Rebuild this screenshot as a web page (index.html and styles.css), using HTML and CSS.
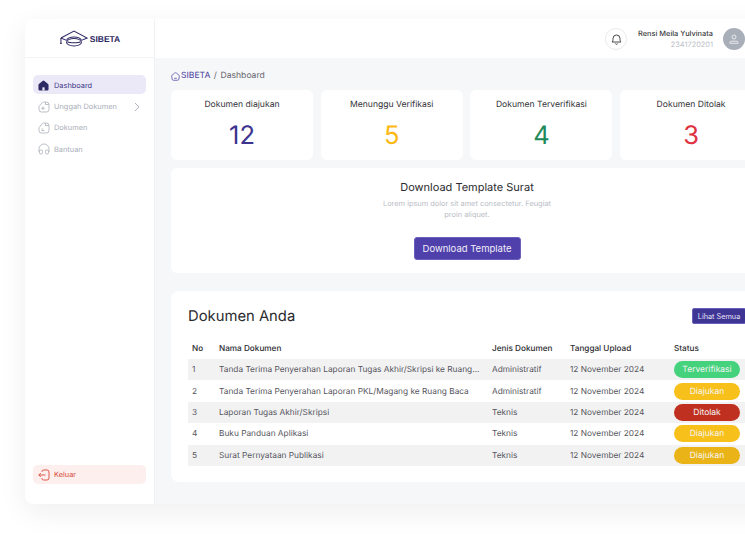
FILE: index.html
```html
<!DOCTYPE html>
<html lang="en">
<head>
    <meta charset="UTF-8">
    <meta name="viewport" content="width=device-width, initial-scale=1.0">
    <title>SIBETA Dashboard</title>
    <link rel="stylesheet" href="styles.css">
</head>
<body>
    <div class="app">
        <aside class="sidebar">
            <div class="logo">
                <svg class="logo-icon" width="28" height="17" viewBox="0 0 30 18" fill="none" stroke="#2e2a63" stroke-width="1.1">
                    <path d="M1 8.500 15 1l14 7.500-6 2.500"/>
                    <path d="M1 8.500 7 11"/>
                    <path d="M1 8.500v4.500"/>
                    <path d="M7 11c1-2.500 4-3.500 8-3.500s7 1 8 3.500"/>
                    <ellipse cx="15" cy="13" rx="8" ry="4"/>
                    <path d="M8 12.500c2 1.500 12 1.500 14 0"/>
                    <circle cx="1" cy="14" r="1" fill="#2e2a63" stroke="none"/>
                </svg>
                <span class="logo-text">SIBETA</span>
            </div>
            <nav class="nav">
                <a class="nav-item active">
                    <svg width="11" height="11" viewBox="0 0 12 12"><path fill="#2e2a63" d="M5 1a1.500 1.500 0 0 1 2 0l4 3.300a1.500 1.500 0 0 1 .5 1.100V10a1.500 1.500 0 0 1-1.500 1.500H2A1.500 1.500 0 0 1 .5 10V5.400A1.500 1.500 0 0 1 1 4.300z"/><rect x="4.800" y="8" width="2.400" height="3.500" fill="#ebe9f8"/></svg>
                    Dashboard
                </a>
                <a class="nav-item">
                    <svg width="12" height="12" viewBox="0 0 12 12" fill="none" stroke="#a9aeb8" stroke-width=".8"><path d="M1 5.500 4.500 1.500a1 1 0 0 1 .8-.4H8.500A2.500 2.500 0 0 1 11 3.600V8.500A2.500 2.500 0 0 1 8.500 11h-5A2.500 2.500 0 0 1 1 8.500z"/><path d="M5 5.500v3.500M3.200 7.200h3.600"/><path d="M7.500 1.200v2.300h3.300"/></svg>
                    Unggah Dokumen
                    <svg class="chevron" width="6" height="10" viewBox="0 0 6 10" fill="none" stroke="#9ca1ab" stroke-width=".8"><path d="m1 1 4 4-4 4"/></svg>
                </a>
                <a class="nav-item">
                    <svg width="12" height="12" viewBox="0 0 12 12" fill="none" stroke="#a9aeb8" stroke-width=".8"><path d="M1 5.500 4.500 1.500a1 1 0 0 1 .8-.4H8.500A2.500 2.500 0 0 1 11 3.600V8.500A2.500 2.500 0 0 1 8.500 11h-5A2.500 2.500 0 0 1 1 8.500z"/><path d="M7.500 1.200v2.300h3.300"/><path d="M3.500 8.500h3M3.500 7h1.500"/></svg>
                    Dokumen
                </a>
                <a class="nav-item">
                    <svg width="12" height="12" viewBox="0 0 12 12" fill="none" stroke="#a9aeb8" stroke-width=".8"><path d="M1 9V6a5 5 0 0 1 10 0v3"/><rect x="1.500" y="7" width="3" height="4" rx="1.200"/><rect x="7.500" y="7" width="3" height="4" rx="1.200"/></svg>
                    Bantuan
                </a>
            </nav>
            <a class="logout">
                <svg width="12" height="12" viewBox="0 0 12 12" fill="none" stroke="#d9483b" stroke-width=".9"><path d="M4 3V2.500A1.500 1.500 0 0 1 5.500 1H9a2 2 0 0 1 2 2v6a2 2 0 0 1-2 2H5.500A1.500 1.500 0 0 1 4 9.500V9"/><path d="M7.500 6H.8M2.800 4l-2 2 2 2"/></svg>
                Keluar
            </a>
        </aside>

        <div class="main">
            <header class="topbar">
                <div class="bell">
                    <svg width="11" height="12" viewBox="0 0 11 12" fill="none" stroke="#333" stroke-width=".9"><path d="M1 9c.8-.8 1-1.500 1-3.500a3.500 3.500 0 0 1 7 0C9 7.500 9.200 8.200 10 9z"/><path d="M4.300 10.500a1.300 1.300 0 0 0 2.400 0"/></svg>
                </div>
                <div class="user">
                    <div class="user-name">Rensi Meila Yulvinata</div>
                    <div class="user-id">2341720201</div>
                </div>
                <div class="avatar">
                    <svg width="10" height="10" viewBox="0 0 10 10" fill="none" stroke="#fff" stroke-width=".7"><circle cx="5" cy="3" r="2"/><path d="M1 9.300V8.500c0-.8.600-1.300 1.300-1.300h5.400c.7 0 1.300.5 1.300 1.300v.8z"/></svg>
                </div>
            </header>

            <div class="content">
                <div class="breadcrumb">
                    <svg width="9" height="9" viewBox="0 0 10 10" fill="none" stroke="#4b3fa0" stroke-width=".8"><path d="M4 1.200a1.500 1.500 0 0 1 2 0l2.800 2.300a1.200 1.200 0 0 1 .5 1.100L8.700 8a1.300 1.300 0 0 1-1.300 1.200H2.600A1.300 1.300 0 0 1 1.300 8L.7 4.600a1.200 1.200 0 0 1 .5-1.100z"/><path d="M3.500 7h3"/></svg>
                    <span class="crumb-root">SIBETA</span>
                    <span class="crumb-sep">/</span>
                    <span>Dashboard</span>
                </div>

                <div class="stats">
                    <div class="card stat">
                        <div class="stat-label">Dokumen diajukan</div>
                        <div class="stat-value purple">12</div>
                    </div>
                    <div class="card stat">
                        <div class="stat-label">Menunggu Verifikasi</div>
                        <div class="stat-value yellow">5</div>
                    </div>
                    <div class="card stat">
                        <div class="stat-label">Dokumen Terverifikasi</div>
                        <div class="stat-value green">4</div>
                    </div>
                    <div class="card stat">
                        <div class="stat-label">Dokumen Ditolak</div>
                        <div class="stat-value red">3</div>
                    </div>
                </div>

                <div class="card download">
                    <h2>Download Template Surat</h2>
                    <p>Lorem ipsum dolor sit amet consectetur. Feugiat<br>proin aliquet.</p>
                    <button class="btn-download">Download Template</button>
                </div>

                <div class="card documents">
                    <div class="documents-head">
                        <h2>Dokumen Anda</h2>
                        <button class="btn-all">Lihat Semua</button>
                    </div>
                    <table>
                        <thead>
                            <tr>
                                <th class="col-no">No</th>
                                <th class="col-name">Nama Dokumen</th>
                                <th class="col-type">Jenis Dokumen</th>
                                <th class="col-date">Tanggal Upload</th>
                                <th>Status</th>
                            </tr>
                        </thead>
                        <tbody>
                            <tr>
                                <td>1</td>
                                <td><div class="doc-name">Tanda Terima Penyerahan Laporan Tugas Akhir/Skripsi ke Ruang Baca</div></td>
                                <td>Administratif</td>
                                <td>12 November 2024</td>
                                <td class="status"><span class="pill pill-green">Terverifikasi</span></td>
                            </tr>
                            <tr>
                                <td>2</td>
                                <td><div class="doc-name">Tanda Terima Penyerahan Laporan PKL/Magang ke Ruang Baca</div></td>
                                <td>Administratif</td>
                                <td>12 November 2024</td>
                                <td class="status"><span class="pill pill-yellow">Diajukan</span></td>
                            </tr>
                            <tr>
                                <td>3</td>
                                <td><div class="doc-name">Laporan Tugas Akhir/Skripsi</div></td>
                                <td>Teknis</td>
                                <td>12 November 2024</td>
                                <td class="status"><span class="pill pill-red">Ditolak</span></td>
                            </tr>
                            <tr>
                                <td>4</td>
                                <td><div class="doc-name">Buku Panduan Aplikasi</div></td>
                                <td>Teknis</td>
                                <td>12 November 2024</td>
                                <td class="status"><span class="pill pill-yellow">Diajukan</span></td>
                            </tr>
                            <tr>
                                <td>5</td>
                                <td><div class="doc-name">Surat Pernyataan Publikasi</div></td>
                                <td>Teknis</td>
                                <td>12 November 2024</td>
                                <td class="status"><span class="pill pill-yellow-dark">Diajukan</span></td>
                            </tr>
                        </tbody>
                    </table>
                </div>
            </div>
        </div>
    </div>
</body>
</html>
```

FILE: styles.css
```css
* {
    box-sizing: border-box;
}
html, body {
    height: 534px;
    overflow: hidden;
}
body {
    margin: 0;
    background: #fff;
    font-family: Inter, "Liberation Sans", sans-serif;
    color: #2b2b2f;
    text-rendering: geometricPrecision;
}
.app {
    display: flex;
    width: 755px;
    height: 485px;
    margin: 19px 0 0 25px;
    border-radius: 8px;
    background: #f6f7f9;
    box-shadow: 0 8px 28px rgba(30, 35, 60, 0.07);
}
.sidebar {
    display: flex;
    flex-direction: column;
    flex: 0 0 130px;
    padding-bottom: 20px;
    background: #fff;
    border-right: 1px solid #f0f1f4;
    border-radius: 8px 0 0 8px;
}
.logo {
    display: flex;
    align-items: center;
    justify-content: center;
    gap: 2px;
    height: 39px;
    padding: 1px 0 0 1px;
    border-bottom: 1px solid #f3f4f6;
}
.logo-text {
    font-family: "Liberation Sans", sans-serif;
    font-size: 8.500px;
    font-weight: 700;
    color: #2e2a63;
}
.nav {
    flex: 1;
    display: flex;
    flex-direction: column;
    gap: 2px;
    padding: 17px 8px 0;
}
.nav-item, .logout {
    display: flex;
    align-items: center;
    gap: 4px;
    height: 19.400px;
    padding: 1px 4px 0 5px;
    border-radius: 5px;
    font-size: 7.400px;
    color: #a9aeb8;
}
.nav-item.active {
    background: #ebe9f8;
    color: #3c3585;
}
.nav-item.active svg {
    margin-right: 1px;
}
.chevron {
    margin-left: auto;
    margin-right: 2px;
}
.logout {
    margin: 0 8px;
    background: #fcefed;
    color: #d9483b;
}
.main {
    flex: 1;
    display: flex;
    flex-direction: column;
    min-width: 0;
}
.topbar {
    display: flex;
    align-items: center;
    height: 39px;
    padding-left: 450px;
    background: #fff;
    border-radius: 0 8px 0 0;
}
.bell {
    display: flex;
    align-items: center;
    justify-content: center;
    width: 22px;
    height: 22px;
    border: 1px solid #e9eaee;
    border-radius: 50%;
}
.user {
    width: 86px;
    margin: 0 10px 0 0;
    text-align: right;
}
.user-name {
    font-size: 7.400px;
    font-weight: 500;
    line-height: 11px;
    white-space: nowrap;
    color: #3a3a40;
}
.user-id {
    font-size: 7.400px;
    line-height: 11px;
    color: #b9bdc6;
}
.avatar {
    display: flex;
    align-items: center;
    justify-content: center;
    width: 22px;
    height: 22px;
    border-radius: 50%;
    background: #a9afb9;
}
.content {
    padding: 12px 17px 0 16px;
}
.breadcrumb {
    display: flex;
    align-items: center;
    gap: 1px;
    height: 12px;
    margin-bottom: 8px;
    font-size: 8.600px;
    color: #66666e;
}
.crumb-root {
    color: #4b3fa0;
}
.crumb-sep {
    margin: 0 2.500px;
}
.card {
    background: #fff;
    border-radius: 6px;
}
.stats {
    display: grid;
    grid-template-columns: repeat(4, 142px);
    gap: 7.700px;
}
.stat {
    height: 70px;
    padding-top: 9px;
    text-align: center;
}
.stat-label {
    font-size: 8.600px;
    line-height: 12px;
    color: #333338;
}
.stat-value {
    margin-top: 10px;
    font-size: 25.500px;
    line-height: 30px;
}
.purple { color: #3d3490; }
.yellow { color: #fdb913; }
.green { color: #1e8a5a; }
.red { color: #e0313f; }
.download {
    height: 105px;
    margin-top: 8px;
    padding-top: 12px;
    text-align: center;
}
.download h2 {
    margin: 0;
    font-size: 11px;
    font-weight: 400;
    line-height: 14px;
    color: #2b2b2f;
}
.download p {
    margin: 5px 0 0;
    font-size: 7.400px;
    line-height: 10.500px;
    color: #b9bdc6;
}
.btn-download {
    width: 107px;
    height: 23px;
    margin-top: 17px;
    border: 1px solid #6a60bb;
    border-radius: 3px;
    background: #4f40ab;
    color: #f1effa;
    font-family: inherit;
    font-size: 9.500px;
}
.documents {
    height: 191px;
    margin-top: 18px;
    padding: 17px 17px 0;
    border-radius: 8px;
}
.documents-head {
    display: flex;
    align-items: center;
    justify-content: space-between;
    height: 16px;
}
.documents-head h2 {
    margin: 0;
    font-size: 14.800px;
    font-weight: 400;
    color: #2b2b2f;
}
.btn-all {
    width: 54px;
    height: 16px;
    padding: 0;
    border: 1px solid #6a60bb;
    border-radius: 2px;
    background: #3f3595;
    color: #e6e4f5;
    font-family: inherit;
    font-size: 7.300px;
}
table {
    width: 557px;
    margin-top: 8px;
    border-collapse: collapse;
    table-layout: fixed;
    font-size: 8.300px;
}
th {
    height: 27px;
    padding: 4px 4px 0;
    font-size: 8.200px;
    font-weight: 500;
    text-align: left;
    color: #2b2b2f;
}
.col-no { width: 27px; }
.col-name { width: 273px; }
.col-type { width: 78px; }
.col-date { width: 104px; }
td {
    height: 21.400px;
    padding: 1px 4px 0;
    color: #55555c;
    white-space: nowrap;
}
td.status {
    padding-top: 0;
}
tbody tr:nth-child(odd) {
    background: #f2f2f3;
}
.doc-name {
    max-width: 262px;
    overflow: hidden;
    text-overflow: ellipsis;
}
.pill {
    display: block;
    width: 66px;
    height: 17px;
    border-radius: 9px;
    font-size: 8.500px;
    line-height: 18px;
    text-align: center;
    color: #f4f4f4;
}
.pill-green { background: #45d27c; }
.pill-yellow { background: #f8c01a; }
.pill-yellow-dark { background: #eab418; }
.pill-red { background: #c03020; }
```
